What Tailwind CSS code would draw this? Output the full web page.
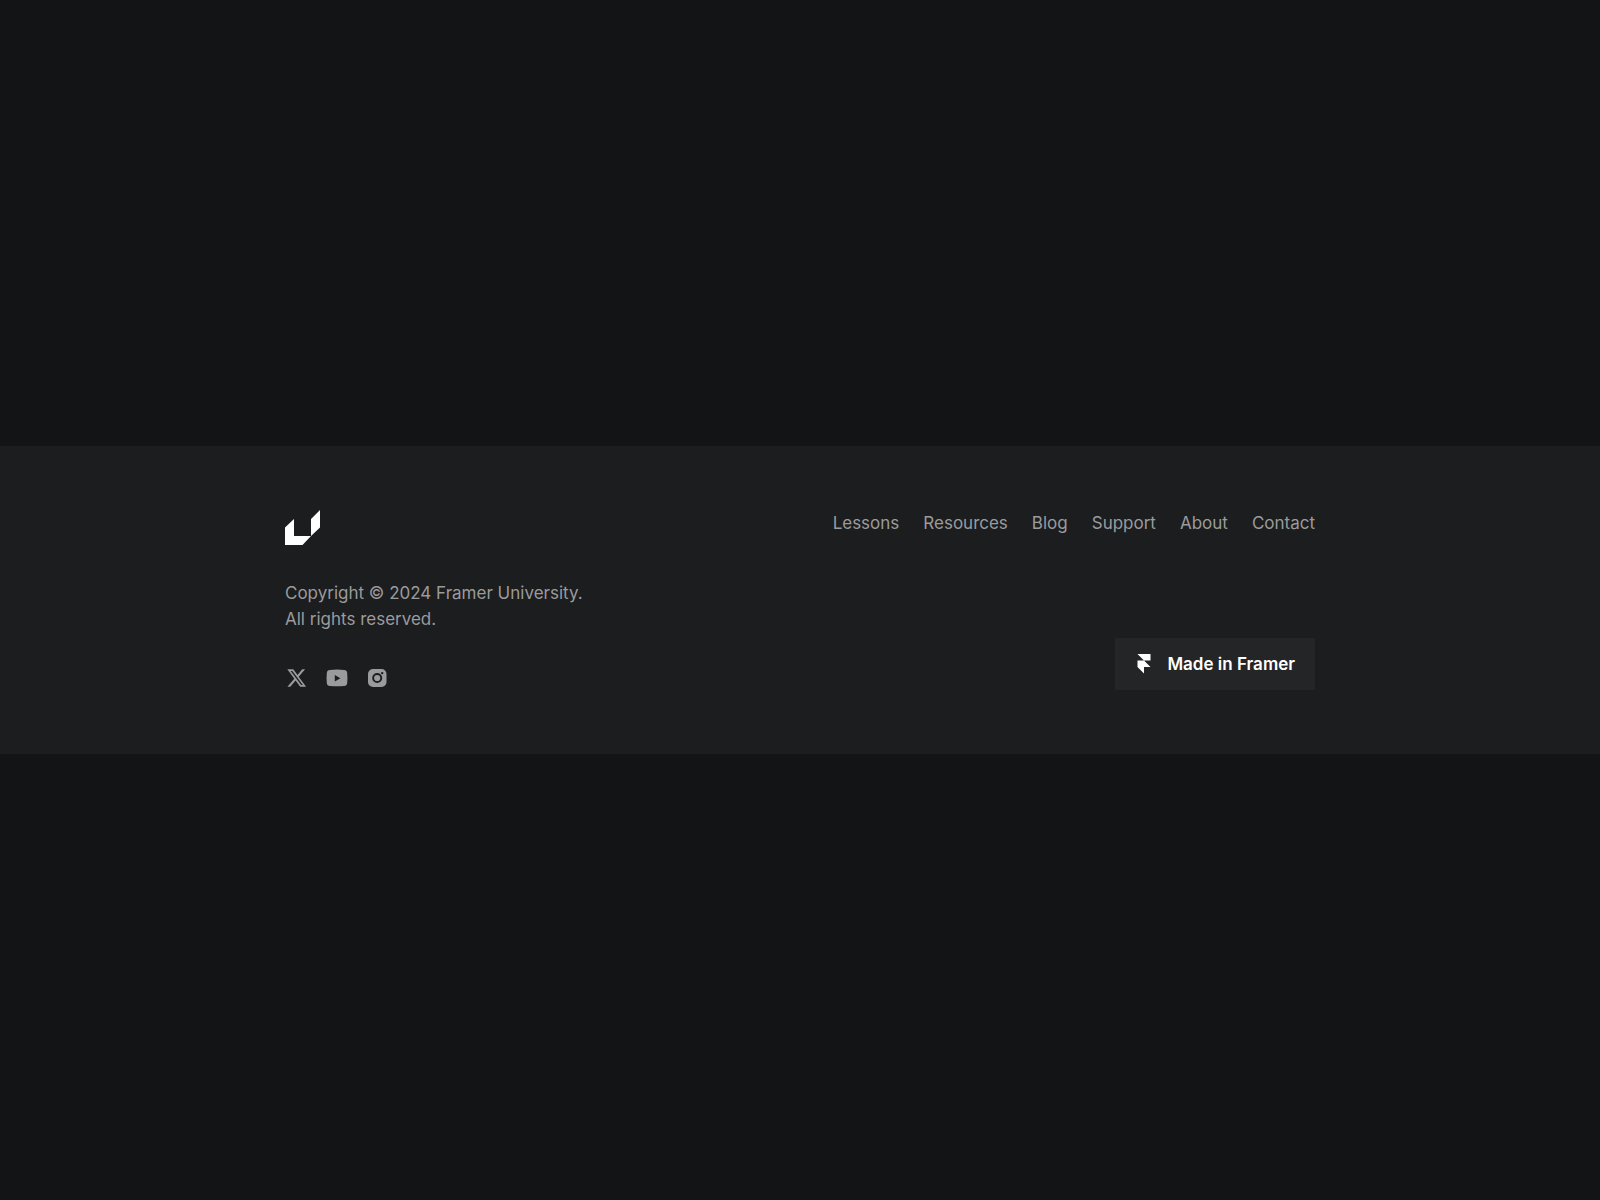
<!DOCTYPE html>
<html lang="en">
<head>
<meta charset="utf-8">
<meta name="viewport" content="width=device-width, initial-scale=1">
<title>Framer University</title>
<script src="https://cdn.jsdelivr.net/npm/@tailwindcss/browser@4"></script>
</head>
<body class="flex min-h-screen flex-col justify-center bg-[#131416] font-['Inter',sans-serif] text-[17px]/[26px] text-[#9a9b9c]">
<footer class="bg-[#1c1d1f] px-6 py-16">
  <div class="mx-auto flex max-w-[1030px] flex-wrap justify-between gap-8">
    <div class="flex flex-col gap-[34px]">
      <a href="#" aria-label="Framer University" class="self-start text-white">
        <svg class="size-9" viewBox="0 0 36 36" fill="currentColor" aria-hidden="true"><path d="M0 17.5 9 9V26H26L17.5 35H0ZM26 9 35 0V17.5L26 26Z"/></svg>
      </a>
      <p>Copyright © 2024 Framer University.<br>All rights reserved.</p>
      <div class="flex gap-4">
        <a href="#" aria-label="X"><svg class="size-6" viewBox="0 0 24 24" fill="currentColor" aria-hidden="true"><path d="M17.2 3.3h2.9l-6.4 7.4 7.400 10h-5.900l-4.600-6.100-5.300 6.100H2.400l6.900-7.900-7-9.500h6l4.200 5.600ZM16.200 18.900h1.600L7.300 4.900H5.600Z"/></svg></a>
        <a href="#" aria-label="YouTube"><svg class="size-6" viewBox="0 0 24 24" fill="currentColor" aria-hidden="true"><path fill-rule="evenodd" d="M5 4Q12 3.200 19 4Q22 4.200 22.200 7Q22.700 12 22.200 17Q22 19.800 19 20Q12 20.700 5 20Q2 19.800 1.800 17Q1.300 12 1.800 7Q2 4.200 5 4ZM9.800 9v6.400l5.600-3.200Z"/></svg></a>
        <a href="#" aria-label="Instagram"><svg class="size-6" viewBox="0 0 24 24" fill="currentColor" aria-hidden="true"><path fill-rule="evenodd" d="M8 3h8.500a5 5 0 0 1 5 5v8a5 5 0 0 1-5 5H8a5 5 0 0 1-5-5V8a5 5 0 0 1 5-5ZM12.200 7a5 5 0 1 0 0 10 5 5 0 0 0 0-10Zm0 1.900a3.100 3.100 0 1 1 0 6.200 3.100 3.100 0 0 1 0-6.200ZM17.200 5.900a1.200 1.200 0 1 0 0 2.400 1.200 1.200 0 0 0 0-2.400Z"/></svg></a>
      </div>
    </div>
    <div class="flex flex-col items-end justify-between gap-8">
      <nav aria-label="Footer" class="flex flex-wrap gap-x-6">
        <a href="#">Lessons</a>
        <a href="#">Resources</a>
        <a href="#">Blog</a>
        <a href="#">Support</a>
        <a href="#">About</a>
        <a href="#">Contact</a>
      </nav>
      <a href="#" class="flex h-13 items-center gap-4 bg-[#242527] px-5 font-semibold text-white">
        <svg class="h-5 w-4" viewBox="0 0 16 20" fill="currentColor" aria-hidden="true"><path d="M2.500 0H15.500V6.500H9ZM2.500 6.500H9L15.500 13H9V19.500L2.500 13Z"/></svg>
        Made in Framer
      </a>
    </div>
  </div>
</footer>
</body>
</html>
